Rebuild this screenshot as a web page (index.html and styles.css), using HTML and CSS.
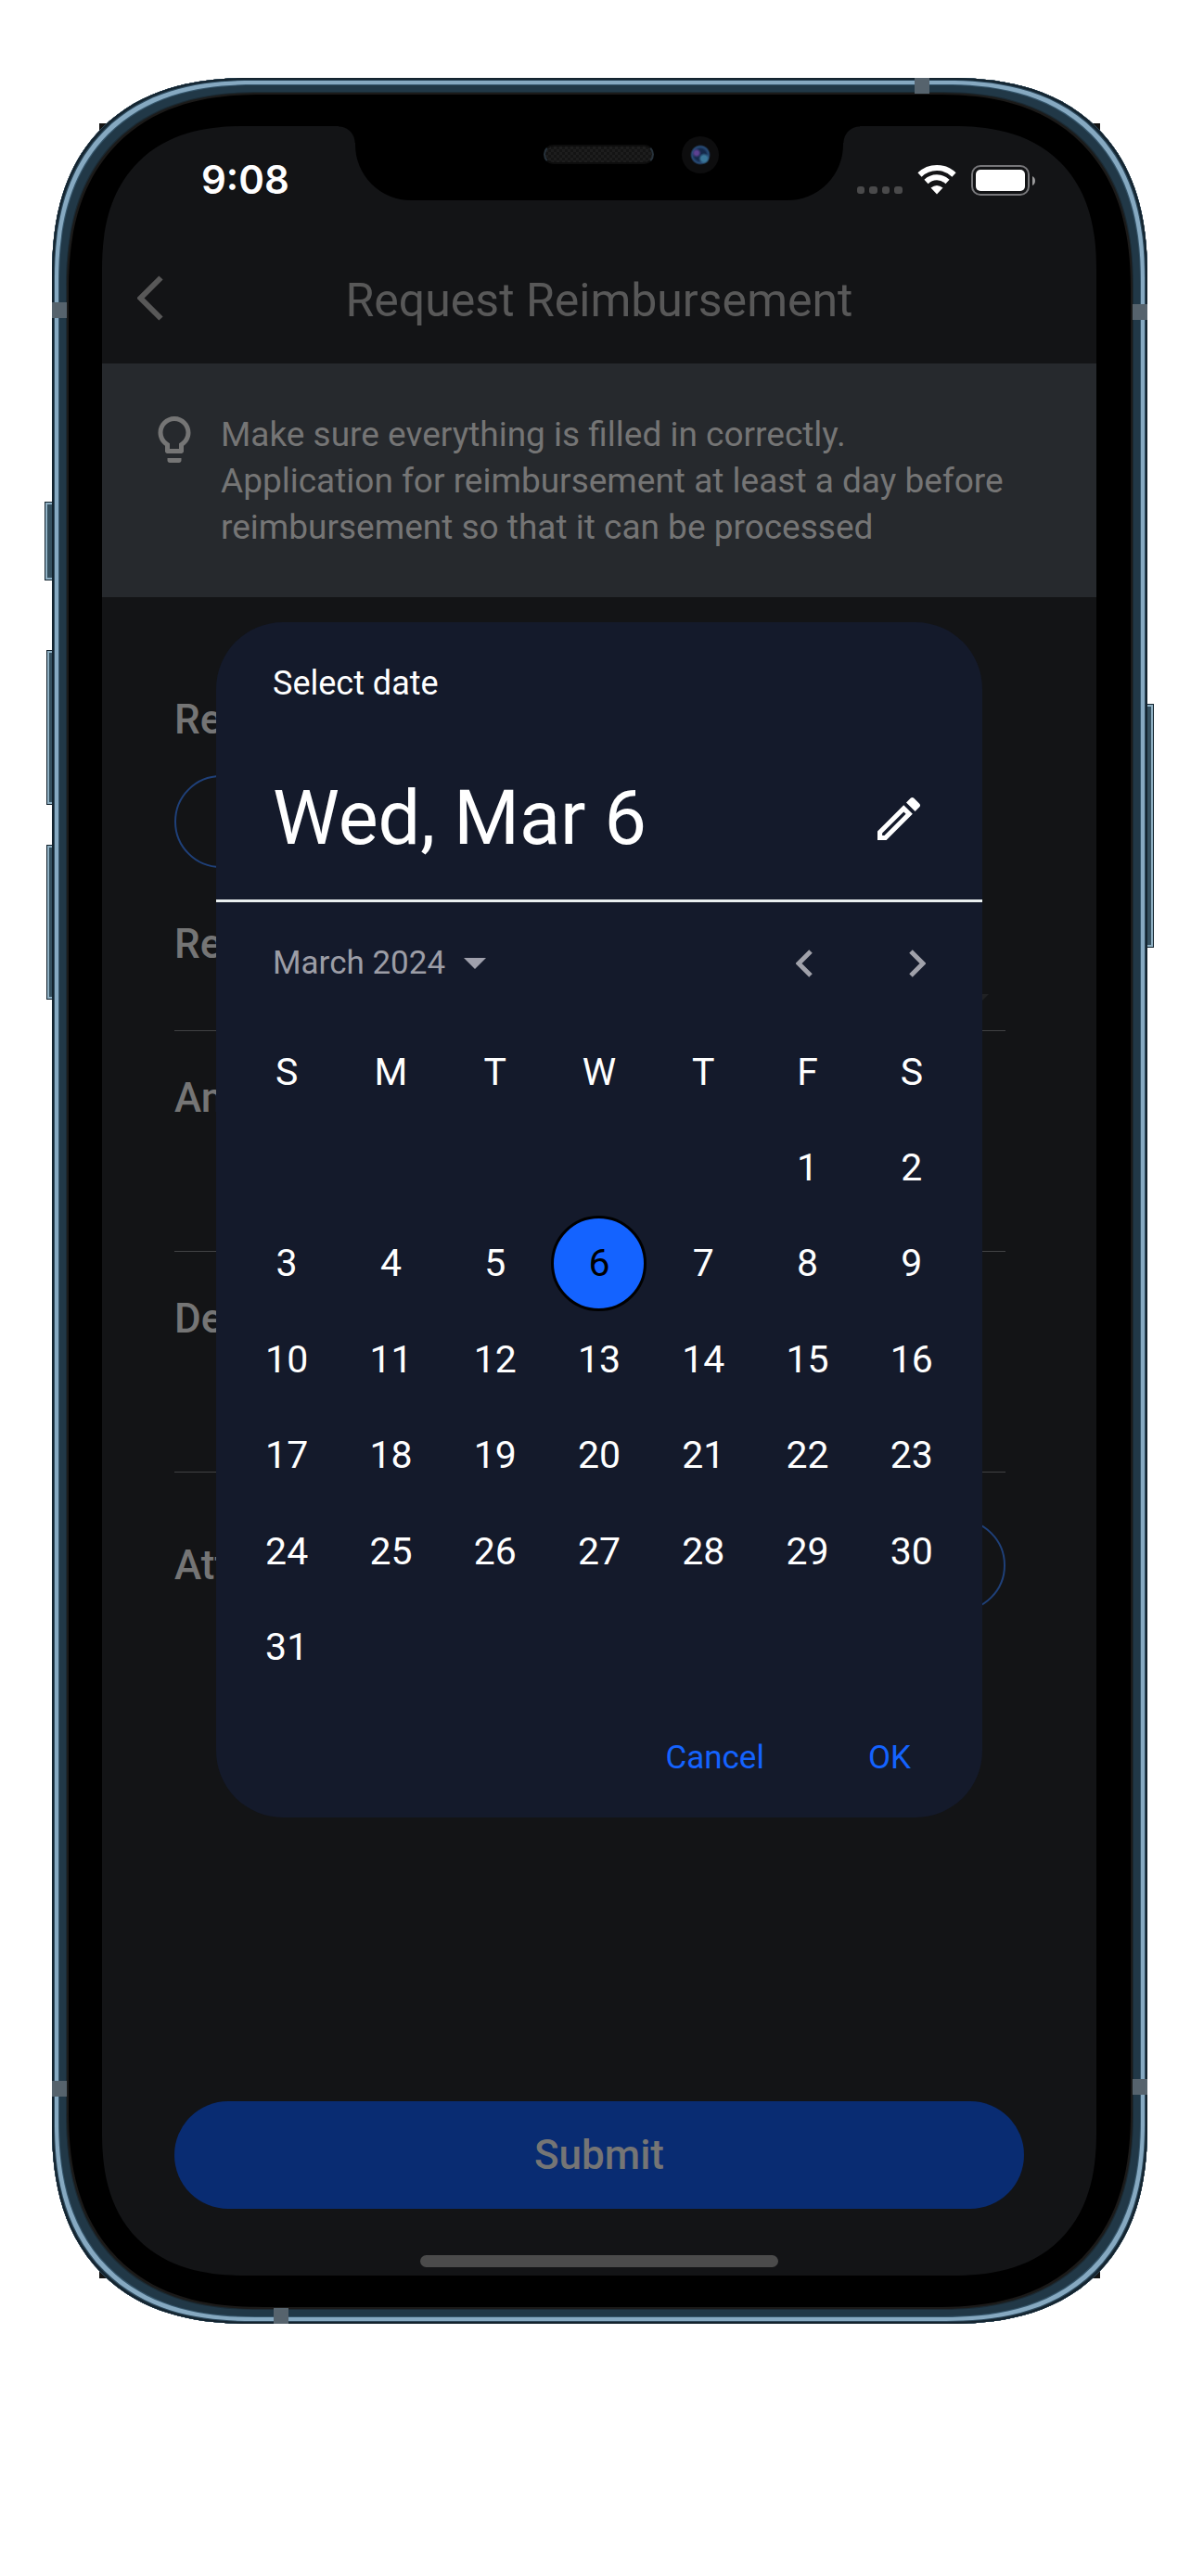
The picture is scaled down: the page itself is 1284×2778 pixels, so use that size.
FILE: index.html
```html
<!DOCTYPE html>
<html lang="en">
<head>
<meta charset="utf-8">
<meta name="viewport" content="width=device-width, initial-scale=1">
<title>Request Reimbursement</title>
<link rel="stylesheet" href="styles.css">
</head>
<body>
<div class="stage">
  <div class="device">
    <span class="key key-mute"></span>
    <span class="key key-up"></span>
    <span class="key key-down"></span>
    <span class="key key-power"></span>
    <div class="frame">
      <span class="band band-top"></span>
      <span class="band band-bottom"></span>
      <span class="band band-left-high"></span>
      <span class="band band-left-low"></span>
      <span class="band band-right-high"></span>
      <span class="band band-right-low"></span>
      <div class="screen">
        <div class="notch">
          <span class="speaker"></span>
          <span class="camera"></span>
        </div>

        <div class="status-bar">
          <span class="clock">9:08</span>
          <svg class="status-icons" viewBox="0 0 192 34" aria-hidden="true">
            <g fill="#4a4a4b">
              <rect x="0" y="24" width="8" height="8" rx="3"/>
              <rect x="13" y="24" width="9" height="8" rx="3"/>
              <rect x="27" y="24" width="8" height="8" rx="3"/>
              <rect x="40" y="24" width="9" height="8" rx="3"/>
            </g>
            <g fill="none" stroke="#fff" stroke-width="6">
              <path d="M67.500 11.500A26.500 26.500 0 0 1 104.500 11.500"/>
              <path d="M74.500 19A16.500 16.500 0 0 1 97.500 19"/>
            </g>
            <path d="M86 32.500L79.500 25.500Q86 20.500 92.500 25.500Z" fill="#fff"/>
            <rect x="124" y="2" width="61" height="31" rx="9" fill="none" stroke="#77777a" stroke-width="2"/>
            <rect x="128" y="6" width="53" height="23" rx="5" fill="#fff"/>
            <path d="M189 13Q192 14.500 192 18T189 23Z" fill="#9a9a9b"/>
          </svg>
        </div>

        <header class="app-bar">
          <button class="back" type="button" aria-label="Back">
            <svg viewBox="0 0 28 50" aria-hidden="true"><path d="M25.500 2.500L3.500 24.500L25.500 46.500" fill="none" stroke="#585858" stroke-width="6"/></svg>
          </button>
          <h1 class="app-title">Request Reimbursement</h1>
        </header>

        <div class="banner">
          <svg class="bulb" viewBox="0 0 24 24" aria-hidden="true"><path fill="#757575" d="M9 21c0 .55.45 1 1 1h4c.55 0 1-.45 1-1v-1H9v1zm3-19C8.140 2 5 5.140 5 9c0 2.380 1.190 4.470 3 5.740V17c0 .55.45 1 1 1h6c.55 0 1-.45 1-1v-2.260c1.810-1.270 3-3.360 3-5.740 0-3.860-3.140-7-7-7zm2.850 11.100l-.85.6V16h-4v-2.300l-.85-.6C7.800 12.160 7 10.630 7 9c0-2.760 2.240-5 5-5s5 2.240 5 5c0 1.630-.8 3.160-2.150 4.100z"/></svg>
          <p class="banner-text">Make sure everything is filled in correctly.<br>Application for reimbursement at least a day before reimbursement so that it can be processed</p>
        </div>

        <form class="form">
          <div class="fields">
            <label class="label" for="ref">Ref</label>
            <input class="pill ref-pill" id="ref" type="text" readonly>
            <label class="label label-next" for="region">Reg</label>
            <div class="picker">
              <select class="line-input" id="region"><option></option></select>
              <svg class="picker-arrow" viewBox="0 0 28 14" aria-hidden="true"><path d="M0 0H28L14 14Z" fill="#202123"/></svg>
            </div>
            <label class="label label-line" for="amount">Am</label>
            <input class="line-input line-tall" id="amount" type="text">
            <label class="label label-line" for="detail">Det</label>
            <input class="line-input line-tall" id="detail" type="text">
            <div class="attach">
              <span class="label">Att</span>
              <button class="pill attach-pill" type="button" aria-label="Attach"></button>
            </div>
          </div>
          <button class="submit" type="button">Submit</button>
        </form>
        <div class="home"></div>

        <div class="overlay">
          <section class="dialog" role="dialog" aria-label="Select date">
            <div class="dialog-head">
              <p class="dialog-kicker">Select date</p>
              <div class="dialog-row">
                <h2 class="dialog-date">Wed, Mar 6</h2>
                <button class="icon-button" type="button" aria-label="Edit">
                  <svg class="pencil" viewBox="3 3 18 18" aria-hidden="true"><path fill="#fff" d="M14.060 9.020l.92.92L5.920 19H5v-.92l9.060-9.060M17.660 3c-.25 0-.51.1-.7.29l-1.830 1.830 3.750 3.750 1.830-1.830c.39-.39.39-1.020 0-1.410l-2.340-2.340c-.2-.2-.45-.29-.71-.29zm-3.600 3.190L3 17.250V21h3.750L17.810 9.940l-3.750-3.750z"/></svg>
                </button>
              </div>
            </div>
            <div class="month-bar">
              <button class="month" type="button">March 2024
                <svg class="caret" viewBox="0 0 24 12" aria-hidden="true"><path d="M0 0H24L12 12Z" fill="#9fa0ac"/></svg>
              </button>
              <button class="icon-button" type="button" aria-label="Previous month">
                <svg class="chevron" viewBox="0 0 18 30" aria-hidden="true"><path d="M16 2L3 15L16 28" fill="none" stroke="#a0a1aa" stroke-width="5"/></svg>
              </button>
              <button class="icon-button next" type="button" aria-label="Next month">
                <svg class="chevron" viewBox="0 0 18 30" aria-hidden="true"><path d="M2 2L15 15L2 28" fill="none" stroke="#a0a1aa" stroke-width="5"/></svg>
              </button>
            </div>
            <div class="calendar-wrap">
              <table class="calendar">
                <thead>
                  <tr><th>S</th><th>M</th><th>T</th><th>W</th><th>T</th><th>F</th><th>S</th></tr>
                </thead>
                <tbody>
                  <tr><td></td><td></td><td></td><td></td><td></td><td>1</td><td>2</td></tr>
                  <tr><td>3</td><td>4</td><td>5</td><td><button class="chosen" type="button">6</button></td><td>7</td><td>8</td><td>9</td></tr>
                  <tr><td>10</td><td>11</td><td>12</td><td>13</td><td>14</td><td>15</td><td>16</td></tr>
                  <tr><td>17</td><td>18</td><td>19</td><td>20</td><td>21</td><td>22</td><td>23</td></tr>
                  <tr><td>24</td><td>25</td><td>26</td><td>27</td><td>28</td><td>29</td><td>30</td></tr>
                  <tr><td>31</td><td></td><td></td><td></td><td></td><td></td><td></td></tr>
                </tbody>
              </table>
            </div>
            <div class="actions">
              <button class="action" type="button">Cancel</button>
              <button class="action" type="button">OK</button>
            </div>
          </section>
        </div>
      </div>
    </div>
  </div>
</div>
</body>
</html>
```
FILE: styles.css
```css
* { box-sizing: border-box; }

body {
  margin: 0;
  background: #fff;
  font-family: Roboto, "Liberation Sans", sans-serif;
}

button, input, select {
  margin: 0;
  padding: 0;
  border: 0;
  background: none;
  color: inherit;
  font: inherit;
}

svg { display: block; }

.stage { padding: 84px 47px 96px 56px; }

/* Phone hardware */
.device { position: relative; isolation: isolate; }

.device::before {
  content: "";
  position: absolute;
  inset: 49px 51px;
  z-index: -1;
  background: #141414;
}

.frame {
  position: relative;
  padding: 52px 55px 52px 54px;
  border-radius: 186px;
  overflow: hidden;
  background: #000;
  box-shadow:
    inset 0 0 0 2px #14242f,
    inset 0 0 0 3px #2c485b,
    inset 0 0 0 7px #86a9c1,
    inset 0 0 0 8px #35556a,
    inset 0 0 0 15px #213847,
    inset 0 0 0 16px #1b2a33,
    inset 0 0 0 18px #1b1a19;
}

.key {
  position: absolute;
  z-index: -1;
  width: 12px;
  border: 1px solid #14242f;
  background: #6d8a9b;
  box-shadow: inset 2px 0 0 #8fb0c3, inset 0 2px 0 #8fb0c3, inset 0 -2px 0 #8fb0c3, inset 0 0 0 5px #35505f;
}

.key-mute { left: -8px; top: 457px; height: 85px; }
.key-up { left: -6px; top: 617px; height: 167px; }
.key-down { left: -6px; top: 827px; height: 167px; }
.key-power { right: -7px; top: 675px; height: 263px; box-shadow: inset -2px 0 0 #8fb0c3, inset 0 2px 0 #8fb0c3, inset 0 -2px 0 #8fb0c3, inset 0 0 0 5px #35505f; }

.band {
  position: absolute;
  width: 16px;
  height: 17px;
  background: #56636d;
}

.band-top { top: 0; right: 235px; }
.band-bottom { bottom: 0; left: 239px; }
.band-left-high { left: 0; top: 242px; }
.band-left-low { left: 0; bottom: 245px; }
.band-right-high { right: 0; top: 244px; }
.band-right-low { right: 0; bottom: 247px; }

.screen {
  position: relative;
  display: flex;
  flex-direction: column;
  border-radius: 134px;
  overflow: hidden;
  background: #131416;
}

/* Smoother, continuous corners where the browser can draw them */
@supports (corner-shape: superellipse(1.26)) {
  .frame { border-radius: 215px; corner-shape: superellipse(1.26); }
  .screen { border-radius: 155px; corner-shape: superellipse(1.26); }
}

.notch {
  position: absolute;
  top: 0;
  left: 50%;
  width: 526px;
  height: 80px;
  margin-left: -263px;
  border-radius: 0 0 60px 60px;
  background: #000;
}

.notch::before, .notch::after {
  content: "";
  position: absolute;
  top: 0;
  width: 18px;
  height: 18px;
}

.notch::before { right: 100%; background: radial-gradient(circle at 0 100%, transparent 17px, #000 18px); }
.notch::after { left: 100%; background: radial-gradient(circle at 100% 100%, transparent 17px, #000 18px); }

.speaker {
  position: absolute;
  left: 203px;
  top: 20px;
  width: 119px;
  height: 21px;
  border-radius: 11px;
  border: 2px solid #0d0d0d;
  border-left-color: #27323b;
  border-right-color: #27323b;
  background: repeating-conic-gradient(#1d1d1d 0 25%, #141414 0 50%) 0 0 / 6px 6px;
}

.camera {
  position: absolute;
  left: 352px;
  top: 11px;
  width: 40px;
  height: 40px;
  border-radius: 50%;
  background:
    radial-gradient(circle at 16px 18px, #5d4191 0 2px, transparent 5px),
    radial-gradient(circle at 24px 24px, #3a7699 0 3px, transparent 6px),
    radial-gradient(circle at 20px 20px, #14284a 0 6px, #284c78 9px, #0d0d0e 11px);
}

/* App */
.status-bar {
  display: flex;
  align-items: center;
  justify-content: space-between;
  height: 116px;
  padding: 0 66px 0 107px;
}

.clock {
  color: #fff;
  font: 600 42px/52px Inter, sans-serif;
}

.status-icons { width: 192px; height: 34px; }

.app-bar {
  display: grid;
  grid-template-columns: 28px 1fr 28px;
  align-items: center;
  height: 140px;
  padding: 0 38px;
}

.back svg { width: 28px; height: 50px; }

.app-title {
  margin: 0;
  padding-top: 4px;
  color: #585858;
  font-size: 50px;
  font-weight: 400;
  line-height: 60px;
  text-align: center;
}

.banner {
  display: flex;
  align-items: flex-start;
  gap: 20px;
  padding: 52px 48px 50px;
  background: #26292d;
}

.bulb { flex: none; width: 60px; height: 60px; }

.banner-text {
  margin: 0;
  color: #757575;
  font-size: 37px;
  line-height: 50px;
}

.form {
  display: flex;
  flex-direction: column;
  padding: 106px 78px 0;
}

.fields {
  display: flex;
  flex-direction: column;
  padding-right: 20px;
}

.label {
  color: #757575;
  font-size: 44px;
  font-weight: 500;
  line-height: 52px;
}

.label-next { margin-top: 56px; }
.label-line { margin-top: 46px; }

.pill {
  height: 100px;
  border: 2px solid #1f4079;
  border-radius: 50px;
}

.fields > .pill { margin-top: 34px; }
.ref-pill { width: 50%; }

.picker { display: grid; }

.line-input {
  grid-area: 1 / 1;
  width: 100%;
  height: 68px;
  border-bottom: 1px solid #414244;
  appearance: none;
}

.line-tall { height: 140px; }

.picker-arrow {
  grid-area: 1 / 1;
  justify-self: end;
  width: 28px;
  height: 14px;
  margin: 28px 18px 0 0;
}

.attach {
  display: flex;
  align-items: center;
  justify-content: space-between;
  margin-top: 50px;
}

.attach-pill { width: 300px; }

.submit {
  height: 116px;
  margin-top: 528px;
  border-radius: 58px;
  background: #092c72;
  color: #757575;
  font-size: 44px;
  font-weight: 500;
  line-height: 52px;
}

.home {
  align-self: center;
  width: 36%;
  height: 13px;
  margin: 50px 0 9px;
  border-radius: 7px;
  background: #4b4b4b;
}

/* Date picker */
.overlay {
  position: absolute;
  inset: 0;
  padding: 535px 123px 0;
}

.dialog {
  border-radius: 72px;
  overflow: hidden;
  background: #141a2b;
  color: #fff;
}

.dialog-head {
  padding: 41px 67px 39px 61px;
  border-bottom: 3px solid #e9efef;
}

.dialog-kicker {
  margin: 0;
  font-size: 36px;
  line-height: 50px;
}

.dialog-row {
  display: flex;
  align-items: center;
  justify-content: space-between;
  margin-top: 73px;
}

.dialog-date {
  margin: 0;
  font-size: 81px;
  font-weight: 400;
  line-height: 96px;
}

.icon-button { display: grid; place-items: center; }
.pencil { width: 46px; height: 46px; }

.month-bar {
  display: flex;
  align-items: center;
  height: 132px;
  padding: 0 61px;
}

.month {
  display: flex;
  align-items: center;
  gap: 20px;
  margin-right: auto;
  color: #9c9da6;
  font-size: 35px;
  line-height: 50px;
}

.caret { width: 24px; height: 12px; }
.chevron { width: 18px; height: 30px; }
.next { margin-left: 104px; }

.calendar-wrap { padding: 0 20px; }

.calendar {
  width: 100%;
  border-collapse: collapse;
  table-layout: fixed;
  font-size: 41px;
  line-height: 50px;
  text-align: center;
}

.calendar th, .calendar td {
  height: 103px;
  padding: 0;
  font-weight: 400;
}

.calendar th { height: 102px; }
.calendar tr:nth-child(even) td { height: 104px; }

.chosen {
  display: block;
  width: 103px;
  height: 103px;
  margin: 0 auto;
  border: 3px solid #000;
  border-radius: 50%;
  background: #1463ff;
  color: #000;
}

.actions {
  display: flex;
  justify-content: flex-end;
  gap: 112px;
  padding: 43px 77px 39px;
}

.action {
  color: #1463ff;
  font-size: 35px;
  line-height: 50px;
}
```
